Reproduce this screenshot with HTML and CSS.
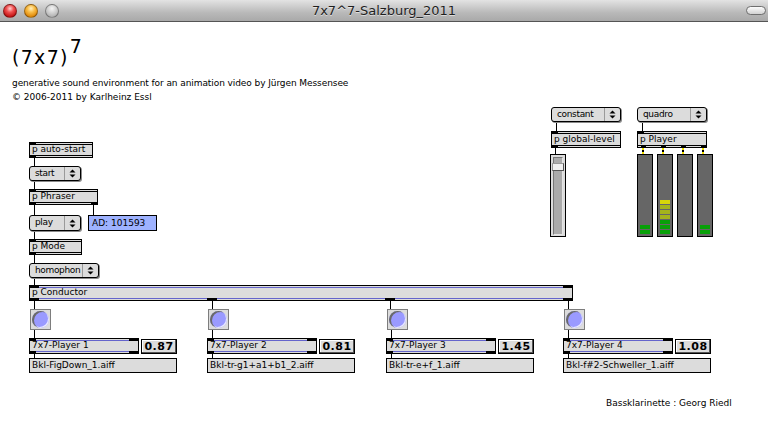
FILE: index.html
```html
<!DOCTYPE html>
<html>
<head>
<meta charset="utf-8">
<title>7x7^7-Salzburg_2011</title>
<link rel="stylesheet" href="styles.css">
</head>
<body>
<div class="window">
  <header class="titlebar">
    <div class="tb-left">
      <span class="light red"></span><span class="light amber"></span><span class="light grey"></span>
    </div>
    <div class="title">7x7^7-Salzburg_2011</div>
    <div class="tb-right"><span class="pill"></span></div>
  </header>
  <main class="canvas">
    <svg class="cords" width="768" height="417" viewBox="0 0 768 417">
      <g stroke="#000" stroke-width="1">
        <line x1="34.5" y1="136" x2="34.5" y2="144"/>
        <line x1="34.5" y1="159" x2="34.5" y2="167"/>
        <line x1="34.5" y1="183" x2="34.5" y2="193"/>
        <line x1="93.5" y1="183" x2="93.5" y2="193"/>
        <line x1="34.5" y1="209" x2="34.5" y2="217"/>
        <line x1="34.5" y1="233" x2="34.5" y2="241"/>
        <line x1="34.5" y1="256" x2="34.5" y2="263"/>
        <line x1="34.5" y1="279" x2="34.5" y2="287"/>
        <line x1="212.5" y1="279" x2="212.5" y2="287"/>
        <line x1="390.5" y1="279" x2="390.5" y2="287"/>
        <line x1="568.5" y1="279" x2="568.5" y2="287"/>
        <line x1="34.5" y1="308" x2="34.5" y2="316"/>
        <line x1="212.5" y1="308" x2="212.5" y2="316"/>
        <line x1="391.5" y1="308" x2="391.5" y2="316"/>
        <line x1="568.5" y1="308" x2="568.5" y2="316"/>
        <line x1="34.5" y1="332" x2="34.5" y2="336"/>
        <line x1="212.5" y1="332" x2="212.5" y2="336"/>
        <line x1="391.5" y1="332" x2="391.5" y2="336"/>
        <line x1="568.5" y1="332" x2="568.5" y2="336"/>
        <line x1="556.5" y1="100" x2="556.5" y2="109"/>
        <line x1="555.5" y1="126" x2="555.5" y2="132"/>
        <line x1="642.5" y1="100" x2="642.5" y2="109"/>
      </g>
      <g stroke="#000" stroke-width="2">
        <line x1="643" y1="126" x2="643" y2="132"/>
        <line x1="663" y1="126" x2="663" y2="132"/>
        <line x1="683" y1="126" x2="683" y2="132"/>
        <line x1="703" y1="126" x2="703" y2="132"/>
      </g>
      <g stroke="#f2e000" stroke-width="2" stroke-dasharray="2 2">
        <line x1="643" y1="126" x2="643" y2="132"/>
        <line x1="663" y1="126" x2="663" y2="132"/>
        <line x1="683" y1="126" x2="683" y2="132"/>
        <line x1="703" y1="126" x2="703" y2="132"/>
      </g>
    </svg>

    <div class="comment heading">(7x7)<span class="sup">7</span></div>
    <div class="comment desc">generative sound environment for an animation video by Jürgen Messensee</div>
    <div class="comment copy">© 2006-2011 by Karlheinz Essl</div>

    <div class="obj n-autostart">p auto-start<span class="io in l"></span><span class="io out l"></span></div>
    <div class="menu n-start"><span class="lbl">start</span><span class="arr"><svg width="7" height="9" viewBox="0 0 7 9"><polygon points="0.5,3.5 3.5,0.5 6.5,3.5"/><polygon points="0.5,5.5 3.5,8.5 6.5,5.5"/></svg></span></div>
    <div class="obj n-phraser">p Phraser<span class="io in l"></span><span class="io out l"></span><span class="io out r"></span></div>
    <div class="menu n-play"><span class="lbl">play</span><span class="arr"><svg width="7" height="9" viewBox="0 0 7 9"><polygon points="0.5,3.5 3.5,0.5 6.5,3.5"/><polygon points="0.5,5.5 3.5,8.5 6.5,5.5"/></svg></span></div>
    <div class="msg blue n-ad">AD: 101593</div>
    <div class="obj n-mode">p Mode<span class="io in l"></span><span class="io out l"></span></div>
    <div class="menu n-homophon"><span class="lbl">homophon</span><span class="arr"><svg width="7" height="9" viewBox="0 0 7 9"><polygon points="0.5,3.5 3.5,0.5 6.5,3.5"/><polygon points="0.5,5.5 3.5,8.5 6.5,5.5"/></svg></span></div>
    <div class="obj purple n-conductor">p Conductor<span class="io in l wide"></span><span class="io in r wide"></span><span class="io out l wide"></span><span class="io out o2"></span><span class="io out o3"></span><span class="io out r wide"></span></div>

    <div class="player p1">
      <div class="bang"><span class="dot"></span></div>
      <div class="prow">
        <div class="obj purple pbox">7x7-Player 1<span class="io in l"></span><span class="io in r wide"></span><span class="io out l"></span><span class="io out r wide"></span></div>
        <div class="num">0.87</div>
      </div>
      <div class="msg file">Bkl-FigDown_1.aiff</div>
    </div>
    <div class="player p2">
      <div class="bang"><span class="dot"></span></div>
      <div class="prow">
        <div class="obj purple pbox">7x7-Player 2<span class="io in l"></span><span class="io in r wide"></span><span class="io out l"></span><span class="io out r wide"></span></div>
        <div class="num">0.81</div>
      </div>
      <div class="msg file">Bkl-tr-g1+a1+b1_2.aiff</div>
    </div>
    <div class="player p3">
      <div class="bang"><span class="dot"></span></div>
      <div class="prow">
        <div class="obj purple pbox">7x7-Player 3<span class="io in l"></span><span class="io in r wide"></span><span class="io out l"></span><span class="io out r wide"></span></div>
        <div class="num">1.45</div>
      </div>
      <div class="msg file">Bkl-tr-e+f_1.aiff</div>
    </div>
    <div class="player p4">
      <div class="bang"><span class="dot"></span></div>
      <div class="prow">
        <div class="obj purple pbox">7x7-Player 4<span class="io in l"></span><span class="io in r wide"></span><span class="io out l"></span><span class="io out r wide"></span></div>
        <div class="num">1.08</div>
      </div>
      <div class="msg file">Bkl-f#2-Schweller_1.aiff</div>
    </div>

    <div class="menu n-constant"><span class="lbl">constant</span><span class="arr"><svg width="7" height="9" viewBox="0 0 7 9"><polygon points="0.5,3.5 3.5,0.5 6.5,3.5"/><polygon points="0.5,5.5 3.5,8.5 6.5,5.5"/></svg></span></div>
    <div class="menu n-quadro"><span class="lbl">quadro</span><span class="arr"><svg width="7" height="9" viewBox="0 0 7 9"><polygon points="0.5,3.5 3.5,0.5 6.5,3.5"/><polygon points="0.5,5.5 3.5,8.5 6.5,5.5"/></svg></span></div>
    <div class="obj tall n-global">p global-level<span class="io in l"></span><span class="io out l"></span></div>
    <div class="obj tall n-pplayer">p Player<span class="io in l"></span><span class="io out q1"></span><span class="io out q2"></span><span class="io out q3"></span><span class="io out q4"></span></div>

    <div class="slider n-slider"><div class="track"></div><div class="knob"></div></div>

    <div class="meters n-meters">
      <div class="meter"><span class="led g"></span><span class="led g"></span></div>
      <div class="meter"><span class="led g"></span><span class="led g"></span><span class="led g"></span><span class="led o"></span><span class="led o"></span><span class="led o"></span><span class="led y"></span></div>
      <div class="meter"></div>
      <div class="meter"><span class="led g"></span><span class="led g"></span></div>
    </div>

    <div class="comment credit">Bassklarinette : Georg Riedl</div>
  </main>
</div>
</body>
</html>
```
FILE: styles.css
```css
* { box-sizing: border-box; margin: 0; padding: 0; }
html, body { width: 768px; height: 439px; overflow: hidden; background: #fff; }
body { font-family: "DejaVu Sans", Verdana, sans-serif; font-size: 9px; color: #000; }

.window { width: 768px; height: 439px; display: flex; flex-direction: column; }

/* ---------- title bar ---------- */
.titlebar {
  flex: none; height: 22px; display: flex; align-items: center;
  background: linear-gradient(#e3e3e3, #b9b9b9 60%, #a9a9a9);
  border-bottom: 1px solid #555;
}
.tb-left { width: 80px; display: flex; gap: 7px; padding-left: 3px; }
.tb-right { width: 80px; display: flex; justify-content: flex-end; padding-right: 2px; }
.title {
  flex: 1; text-align: center; font-size: 13px; color: #1e1e1e;
  text-shadow: 0 1px 0 rgba(255,255,255,0.55); line-height: 21px;
}
.light { width: 14px; height: 14px; border-radius: 50%; border: 1px solid rgba(0,0,0,0.35); }
.light.red { background: radial-gradient(circle at 50% 30%, #ffd0d0 0, #f05252 35%, #c41515 75%, #a30d0d 100%); }
.light.amber { background: radial-gradient(circle at 50% 30%, #fff0c0 0, #f9be4a 35%, #e08a0b 75%, #b86a00 100%); }
.light.grey { background: radial-gradient(circle at 50% 30%, #f4f4f4 0, #d3d3d3 40%, #b0b0b0 80%, #9c9c9c 100%); }
.pill { width: 20px; height: 9px; border-radius: 5px; border: 1px solid #6f6f6f; background: linear-gradient(#fcfcfc, #d2d2d2); }

/* ---------- canvas ---------- */
.canvas { flex: 1; position: relative; background: #fff; }
.cords { position: absolute; left: 0; top: 0; }

.comment { position: absolute; white-space: nowrap; line-height: 11px; }
.heading { left: 12px; top: 13px; font-size: 19px; line-height: 22px; letter-spacing: 1.3px; }
.heading .sup { vertical-align: 11px; margin-left: 1px; }
.desc { left: 12px; top: 56px; letter-spacing: -0.08px; }
.copy { left: 12px; top: 70px; }
.credit { left: 606px; top: 376px; }

/* patcher object box */
.obj {
  position: absolute; height: 16px; background: #dcdcdc; border: 1px solid #000;
  padding-left: 2px; line-height: 13px; white-space: nowrap; --edge: #000;
}
.obj::before, .obj::after { content: ""; position: absolute; left: 0; right: 0; height: 1px; background: var(--edge); }
.obj::before { top: 1px; }
.obj::after { bottom: 1px; }
.obj.purple { --edge: #6464cc; }
.obj.tall { height: 17px; line-height: 14px; }
.io { position: absolute; height: 3px; width: 7px; background: #000; z-index: 1; }
.io.in { top: -1px; }
.io.out { bottom: -1px; }
.io.l { left: -1px; }
.io.r { right: -1px; }
.io.wide { width: 10px; }
.io.o2 { left: 177px; width: 10px; }
.io.o3 { left: 355px; width: 10px; }
.io.q1 { left: 3px; width: 5px; }
.io.q2 { left: 23px; width: 5px; }
.io.q3 { left: 43px; width: 5px; }
.io.q4 { left: 63px; width: 5px; }

/* menus */
.menu {
  position: absolute; height: 15px; display: flex; border: 1px solid #000; border-radius: 3px;
  background: #dcdcdc; box-shadow: 1px 1px 0 #8a8a8a; line-height: 13px; white-space: nowrap;
}
.menu .lbl { flex: 1; padding-left: 5px; overflow: hidden; letter-spacing: -0.35px; }
.menu .arr { width: 16px; flex: none; border-left: 1px solid #9a9a9a; display: flex; align-items: center; justify-content: center; }
.menu .arr polygon { fill: #000; }

/* message boxes */
.msg { position: absolute; height: 15px; border: 1px solid #000; background: #dcdcdc; padding-left: 2px; line-height: 13px; white-space: nowrap; }
.msg.blue { background: #9eb2ff; height: 16px; padding-left: 3px; line-height: 14px; }

/* nodes */
.n-autostart { left: 29px; top: 120px; width: 64px; }
.n-start { left: 29px; top: 144px; width: 52px; }
.n-phraser { left: 29px; top: 167px; width: 69px; }
.n-play { left: 29px; top: 193px; width: 52px; height: 16px; }
.n-ad { left: 88px; top: 193px; width: 69px; }
.n-mode { left: 29px; top: 217px; width: 53px; }
.n-homophon { left: 29px; top: 241px; width: 70px; }
.n-conductor { left: 29px; top: 263px; width: 544px; }
.n-constant { left: 551px; top: 85px; width: 70px; }
.n-quadro { left: 637px; top: 85px; width: 70px; }
.n-global { left: 551px; top: 109px; width: 70px; }
.n-pplayer { left: 637px; top: 109px; width: 70px; }

/* players */
.player { position: absolute; top: 287px; display: flex; flex-direction: column; }
.p1 { left: 29px; }
.p2 { left: 207px; }
.p3 { left: 386px; }
.p4 { left: 563px; }
.bang {
  width: 21px; height: 21px; margin-left: 1px; border: 1px solid #7d7d7d; background: #dcdcdc;
  display: flex; align-items: center; justify-content: center;
}
.bang .dot { width: 17px; height: 17px; border-radius: 50%; background: #9a9aff; box-shadow: inset 2px 1px 0 #6a6a6a, inset -1px -1px 0 #e8e8ff; }
.prow { display: flex; gap: 2px; margin-top: 8px; align-items: flex-start; }
.pbox { position: relative; width: 110px; }
.num {
  width: 36px; height: 15px; margin-top: 1px; border: 1px solid #000; background: #dcdcdc;
  box-shadow: inset -1px -1px 0 #555, inset 1px 1px 0 #fff;
  font-weight: bold; font-size: 11px; line-height: 13px; text-align: center; letter-spacing: 0.5px;
}
.file { position: relative; width: 148px; margin-top: 4px; }

/* slider */
.slider { position: absolute; width: 16px; height: 83px; border: 1px solid #000; background: #dcdcdc; }
.n-slider { left: 550px; top: 132px; }
.slider .track { position: absolute; left: 2px; top: 2px; width: 10px; bottom: 1px; background: #ababab; border: 1px solid #777; border-right-color: #e4e4e4; border-bottom-color: #e4e4e4; }
.slider .knob { position: absolute; left: 1px; top: 8px; width: 12px; height: 8px; background: #f0f0f0; border: 1px solid #555; border-top-color: #999; border-left-color: #999; }

/* meters */
.meters { position: absolute; display: flex; gap: 4px; }
.n-meters { left: 637px; top: 132px; }
.meter {
  width: 16px; height: 83px; border: 1px solid #000; background: #666;
  display: flex; flex-direction: column-reverse; gap: 1px; padding: 0 0 2px 2px;
}
.led { width: 10px; height: 4px; flex: none; }
.led.g { background: #08a008; }
.led.o { background: #a4b41c; }
.led.y { background: #d6d60a; }
```
